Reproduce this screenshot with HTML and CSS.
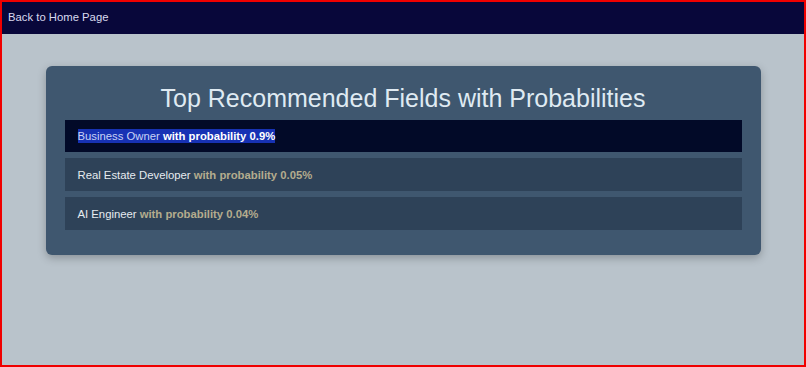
FILE: index.html
```html
<!DOCTYPE html>
<html lang="en">
  <head>
    <meta charset="UTF-8" />
    <meta name="viewport" content="width=device-width, initial-scale=1.0" />
    <title>Recommended Fields</title>
    <link rel="stylesheet" href="styles.css">
  </head>
  <body>
    <div class="frame">
      <nav class="topbar">
        <a href="#" class="home-link">Back to Home Page</a>
      </nav>
      <div class="card">
        <h2>Top Recommended Fields with Probabilities</h2>
        <ul class="fields">
          <li class="field selected">
            <span class="hl">Business Owner <b>with probability 0.9%</b></span>
          </li>
          <li class="field">
            <span>Real Estate Developer <b>with probability 0.05%</b></span>
          </li>
          <li class="field">
            <span>AI Engineer <b>with probability 0.04%</b></span>
          </li>
        </ul>
      </div>
    </div>
  </body>
</html>
```

FILE: styles.css
```css
body {
  margin: 0;
  font-family: "Liberation Sans", Arial, sans-serif;
}
.frame {
  box-sizing: border-box;
  height: 367px;
  border: 2px solid #f00000;
  background: #b9c3cb;
}
.topbar {
  box-sizing: border-box;
  height: 32px;
  background: #08073a;
  display: flex;
  align-items: center;
  padding: 0 0 3px 6px;
}
.home-link {
  color: #d9d9ef;
  text-decoration: none;
  font-size: 11.3px;
}
.card {
  width: 715px;
  box-sizing: border-box;
  margin: 32px auto 0;
  background: #3f576f;
  border-radius: 6px;
  padding: 18px 19px 19px;
  box-shadow: 0 3px 8px rgba(0, 0, 0, 0.25);
}
.card h2 {
  margin: 0 0 8px;
  text-align: center;
  font-weight: normal;
  font-size: 25px;
  line-height: 28px;
  color: #dfeaf2;
}
.fields {
  list-style: none;
  margin: 0;
  padding: 0;
}
.field {
  height: 33px;
  display: flex;
  align-items: center;
  padding-left: 13px;
  margin-bottom: 6px;
  background: #2e4258;
  color: #e6ebef;
  font-size: 11.3px;
}
.field b {
  color: #b4ac8e;
}
.field.selected {
  height: 32px;
  background: #020a28;
}
.hl {
  background: #1732b4;
  color: #c9d3f6;
  padding: 1px 0;
}
.hl b {
  color: #ffffff;
}
```
